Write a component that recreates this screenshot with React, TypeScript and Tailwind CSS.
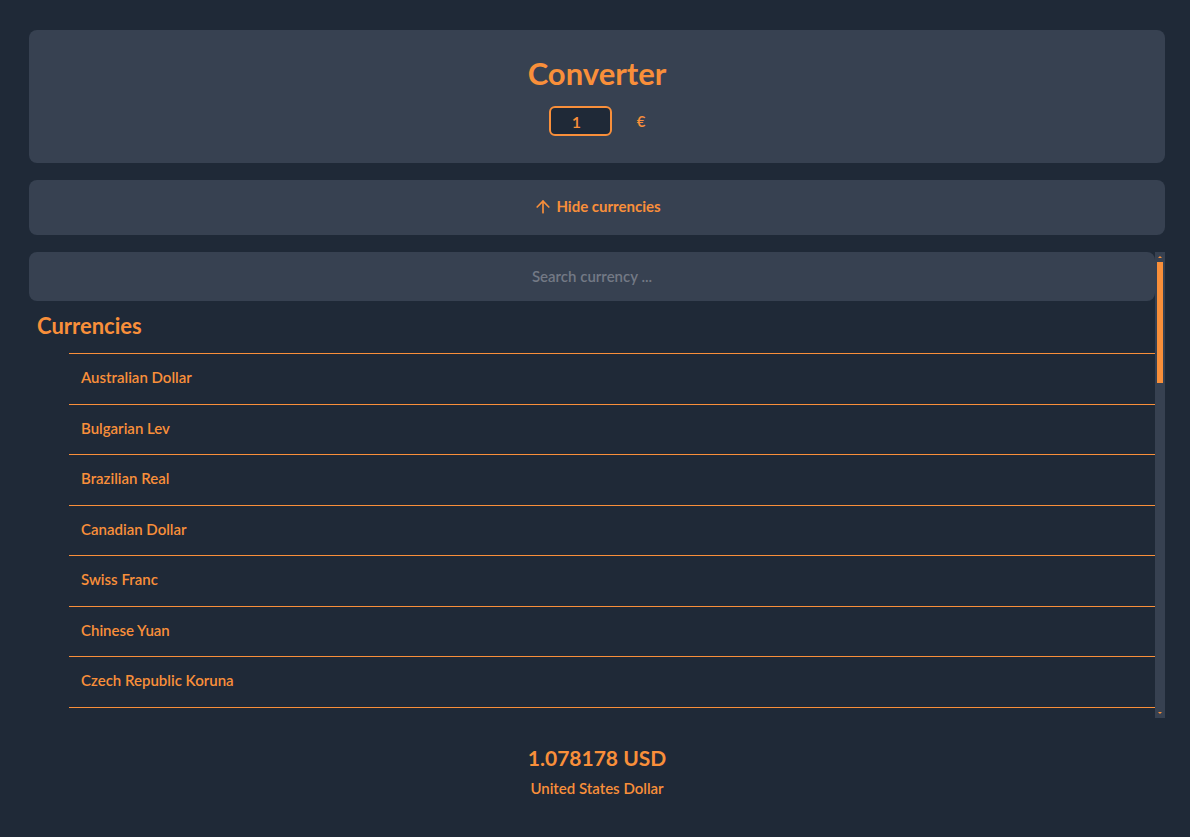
import { ArrowUp } from "lucide-react"

const currencies = [
  "Australian Dollar",
  "Bulgarian Lev",
  "Brazilian Real",
  "Canadian Dollar",
  "Swiss Franc",
  "Chinese Yuan",
  "Czech Republic Koruna",
  "Danish Krone",
  "British Pound Sterling",
  "Hong Kong Dollar",
  "Hungarian Forint",
  "Indonesian Rupiah",
  "Israeli New Sheqel",
  "Indian Rupee",
  "Icelandic Króna",
  "Japanese Yen",
  "South Korean Won",
  "Mexican Peso",
  "Malaysian Ringgit",
  "Norwegian Krone",
  "New Zealand Dollar",
  "Philippine Peso",
  "Polish Zloty",
  "Romanian Leu",
  "Swedish Krona",
  "Singapore Dollar",
  "Thai Baht",
  "Turkish Lira",
  "United States Dollar",
  "South African Rand",
]

function Scrollbar() {
  return (
    <div className="flex w-[10px] flex-col items-center bg-[#374151]">
      <svg width="6" height="10" viewBox="0 0 6 10" className="shrink-0">
        <path d="M1 6 L3 4 L5 6 Z" fill="#f98f3a" />
      </svg>
      <div className="h-[121px] w-[6px] bg-[#f98f3a]" />
      <div className="flex-1" />
      <svg width="6" height="10" viewBox="0 0 6 10" className="shrink-0">
        <path d="M1 4 L5 4 L3 6 Z" fill="#f98f3a" />
      </svg>
    </div>
  )
}

export default function App() {
  return (
    <div className="min-h-screen bg-[#1f2937] pl-[29px] pr-[25px] py-[30px] text-[#f98f3a] font-['Lato','Open_Sans',sans-serif]">
      {/* Converter */}
      <section className="flex flex-col items-center rounded-lg bg-[#374151] pt-[24px] pb-[27px]">
        <h1 className="text-[31px] font-bold leading-[38px]">Converter</h1>
        <div className="mt-[14px] flex items-center">
          <input
            defaultValue="1"
            className="h-[30px] w-[63px] rounded-md border-2 border-[#f98f3a] bg-[#1f2937] pl-[21px] text-left text-base font-semibold text-[#f98f3a] outline-none"
          />
          <span className="ml-[25px] text-[15px] font-semibold">€</span>
        </div>
      </section>

      {/* Toggle */}
      <button className="mt-[17px] flex h-[55px] w-full items-center justify-center gap-[3px] rounded-lg bg-[#374151] pb-[2px] text-[15px] font-bold text-[#f98f3a]">
        <ArrowUp className="h-[20px] w-[20px]" strokeWidth={2} />
        Hide currencies
      </button>

      {/* Currency list */}
      <div className="mt-[17px] flex h-[466px]">
        <div className="flex-1 overflow-hidden">
          <input
            placeholder="Search currency ..."
            className="h-[49px] w-full rounded-lg bg-[#374151] pb-[2px] text-center text-[15px] font-semibold text-[#f98f3a] outline-none placeholder:text-[#737985]"
          />
          <h2 className="mt-[10px] pl-[8px] text-[22px] font-bold leading-[30px]">Currencies</h2>
          <ul className="mt-[12px] ml-[40px] border-t border-[#f98f3a]">
            {currencies.map((c, i) => (
              <li
                key={c}
                className={
                  "flex items-center border-b border-[#f98f3a] pb-[3px] pl-[12px] text-[15px] font-semibold " +
                  (i % 2 === 0 ? "h-[51px]" : "h-[50px]")
                }
              >
                {c}
              </li>
            ))}
          </ul>
        </div>
        <Scrollbar />
      </div>

      {/* Result */}
      <div className="mt-[26px] flex flex-col items-center">
        <p className="text-[21px] font-bold leading-[28px]">1.078178 USD</p>
        <p className="mt-[5px] text-[15px] font-semibold">United States Dollar</p>
      </div>
    </div>
  )
}
